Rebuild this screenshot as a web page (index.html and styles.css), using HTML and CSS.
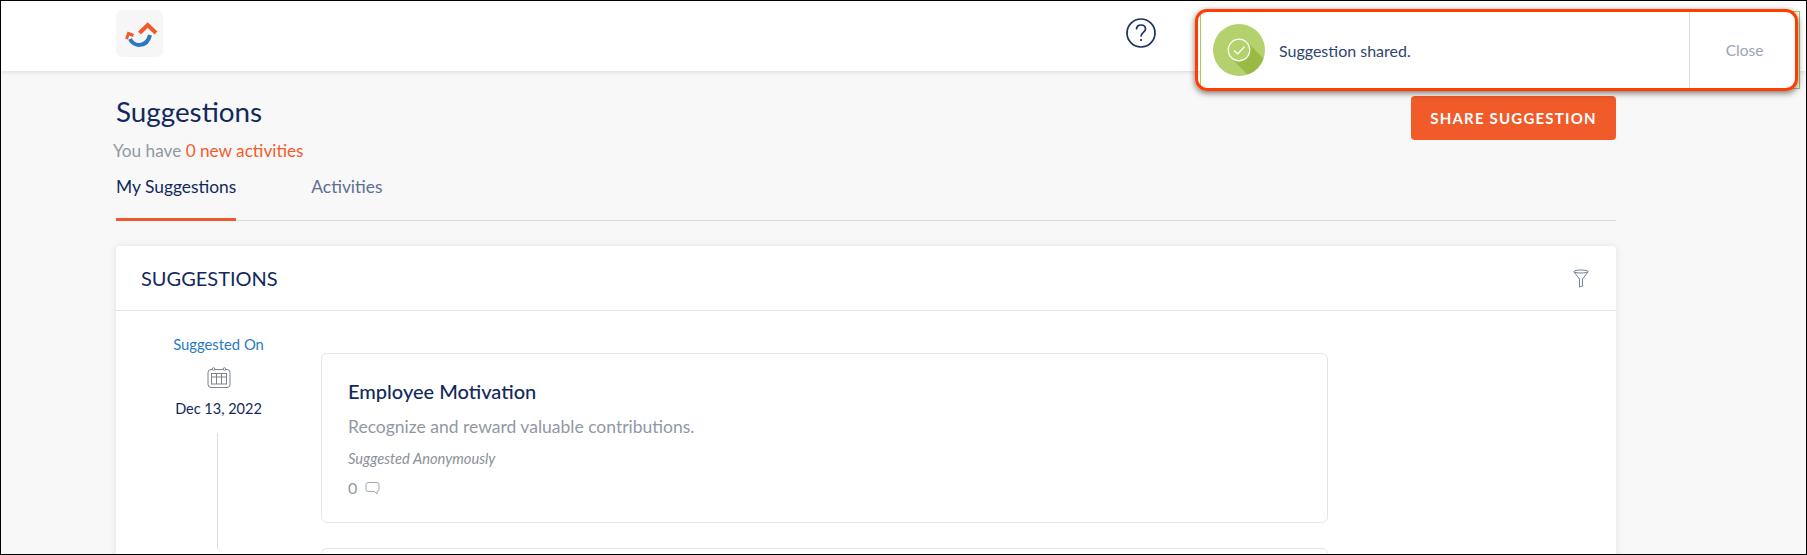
FILE: index.html
```html
<!DOCTYPE html>
<html lang="en">
<head>
<meta charset="utf-8">
<title>Suggestions</title>
<link rel="stylesheet" href="styles.css">
</head>
<body>
<div class="page">
  <header class="topbar">
    <div class="logo">
      <svg width="47" height="47" viewBox="0 0 47 47" fill="none">
        <path d="M23.5 23 L31.7 15 L40 23" stroke="#f45a28" stroke-width="4"/>
        <path d="M14 29 C17.5 37 31 38 34 25" stroke="#2a78bd" stroke-width="4"/>
        <path d="M10.500 29 L12.500 23.500 L17.500 25.500" stroke="#f45a28" stroke-width="3"/>
      </svg>
    </div>
    <svg class="help" width="30" height="30" viewBox="0 0 30 30" fill="none" stroke="#1b3263" stroke-width="1.700">
      <ellipse cx="15" cy="15" rx="14" ry="14"/>
      <path d="M10.500 11.500 C10.500 8.500 12.500 7 15 7 C17.800 7 19.500 8.800 19.500 11 C19.500 14.500 15 14.500 15 18.500"/>
      <path d="M15 21 V23"/>
    </svg>
  </header>

  <main class="content">
    <div class="title-row">
      <div>
        <h1 class="title">Suggestions</h1>
        <p class="subtitle">You have <span class="accent">0 new activities</span></p>
      </div>
      <button class="share">SHARE SUGGESTION</button>
    </div>

    <nav class="tabs">
      <a class="tab active">My Suggestions</a>
      <a class="tab">Activities</a>
    </nav>

    <section class="panel">
      <div class="panel-head">
        <h2 class="panel-title">SUGGESTIONS</h2>
        <svg width="16" height="19" viewBox="0 0 16 19" fill="none" stroke="#6f7f98" stroke-width="1">
          <ellipse cx="8" cy="2.500" rx="7" ry="1.500"/>
          <path d="M1 3 L6.500 10 V18 L9.500 17 V10 L15 3"/>
        </svg>
      </div>
      <div class="timeline">
        <div class="when">
          <div class="when-label">Suggested On</div>
          <svg class="cal" width="24" height="21" viewBox="0 0 24 21" fill="none" stroke="#7c8290" stroke-width="1">
            <rect x="1" y="2.500" width="22" height="18" rx="3"/>
            <rect x="4.500" y="6.500" width="15" height="10.500"/>
            <path d="M4.500 10 H19.500 M9.500 6.500 V17 M14.500 6.500 V17"/>
            <circle cx="6.500" cy="2" r="1.300" fill="#fff"/>
            <circle cx="17.500" cy="2" r="1.300" fill="#fff"/>
          </svg>
          <div class="when-date">Dec 13, 2022</div>
          <div class="when-line"></div>
        </div>
        <div class="cards">
          <article class="card">
            <h3 class="card-title">Employee Motivation</h3>
            <p class="card-desc">Recognize and reward valuable contributions.</p>
            <p class="card-anon">Suggested Anonymously</p>
            <div class="card-count">0
              <svg width="15" height="13" viewBox="0 0 15 13" fill="none" stroke="#a4a9b2" stroke-width="1">
                <path d="M3 .500 H12 Q14 .500 14 2.500 V7.500 Q14 9.500 12 9.500 V12 L9.500 9.500 H3 Q1 9.500 1 7.500 V2.500 Q1 .500 3 .500 Z"/>
              </svg>
            </div>
          </article>
          <article class="card"></article>
        </div>
      </div>
    </section>
  </main>

  <aside class="toast">
    <div class="toast-main">
      <svg class="toast-icon" width="52" height="52" viewBox="0 0 52 52">
        <defs><clipPath id="disc"><circle cx="26" cy="26" r="26"/></clipPath></defs>
        <circle cx="26" cy="26" r="26" fill="#b5d16e"/>
        <path d="M18 34 L34 18 L60 44 L44 60 Z" fill="#9ab945" clip-path="url(#disc)"/>
        <circle cx="26" cy="26" r="10.800" fill="#b5d16e" stroke="#fff" stroke-width="1.200"/>
        <path d="M21 26.500 L24.800 30 L31.500 22.500" fill="none" stroke="#fff" stroke-width="1.200"/>
      </svg>
      <span class="toast-text">Suggestion shared.</span>
    </div>
    <span class="toast-close">Close</span>
    <div class="callout"></div>
  </aside>
</div>
</body>
</html>
```
FILE: styles.css
```css
* { box-sizing: border-box; }
html, body { margin: 0; padding: 0; }
body { font-family: Lato, "Open Sans", sans-serif; color: #12295d; }
h1, h2, h3, p { margin: 0; font-weight: 400; }

.page {
  position: relative;
  height: 555px;
  overflow: hidden;
  background: #f8f8f8;
  border: 1px solid #000;
}

.topbar {
  display: flex;
  align-items: flex-start;
  height: 70px;
  padding: 9px 0 0 115px;
  background: #fff;
  box-shadow: 0 1px 5px rgba(0, 0, 0, .12);
}
.logo { width: 47px; height: 47px; background: #f6f6f6; border-radius: 7px; }
.help { margin: 8px 0 0 963px; }

.content { width: 1500px; margin-left: 115px; }
.title-row {
  display: flex;
  justify-content: space-between;
  align-items: flex-start;
  padding-top: 24px;
}
.title { font-size: 27.800px; line-height: 34px; }
.subtitle { margin: 11px 0 0 -3px; font-size: 17.200px; line-height: 22px; color: #9198a4; }
.accent { color: #f35b2a; }
.share {
  width: 205px;
  height: 44px;
  margin-top: 1px;
  border: 0;
  border-radius: 4px;
  background: #f15a29;
  color: #fff;
  font: 700 15px Lato, sans-serif;
  letter-spacing: 1.200px;
}

.tabs {
  display: flex;
  gap: 75px;
  height: 50px;
  margin-top: 9px;
  border-bottom: 1px solid #d9d9d9;
}
.tab { height: 50px; padding-top: 5px; font-size: 17.400px; line-height: 22px; color: #5d6f92; }
.tab.active { color: #12295d; border-bottom: 3px solid #f05a2a; }

.panel {
  height: 400px;
  margin-top: 25px;
  background: #fff;
  border-radius: 4px;
  box-shadow: 0 0 8px rgba(0, 0, 0, .09);
}
.panel-head {
  display: flex;
  justify-content: space-between;
  align-items: center;
  height: 65px;
  padding: 0 27px 0 25px;
  border-bottom: 1px solid #e4e4e4;
}
.panel-title { font-size: 20px; }

.timeline { display: flex; padding-top: 22px; }
.when {
  display: flex;
  flex-direction: column;
  align-items: center;
  width: 205px;
  flex: none;
}
.when-label { font-size: 14.800px; line-height: 22px; color: #2a7ac0; }
.cal { margin-top: 12px; }
.when-date { margin-top: 10px; font-size: 14.500px; line-height: 22px; }
.when-line { width: 1px; height: 116px; margin: 13px 3px 0 0; background: #dedede; }

.cards { width: 1007px; padding-top: 20px; }
.card {
  height: 170px;
  margin-bottom: 25px;
  padding: 22px 26px;
  background: #fff;
  border: 1.500px solid #e6e6e6;
  border-radius: 6px;
}
.card-title { font-size: 20px; line-height: 30px; font-weight: 500; }
.card-desc { margin-top: 7px; font-size: 17.500px; line-height: 28px; color: #9198a4; }
.card-anon { margin-top: 7px; font-size: 14.700px; line-height: 20px; font-style: italic; color: #8b909b; }
.card-count {
  display: flex;
  align-items: center;
  gap: 8px;
  margin-top: 9px;
  font-size: 16px;
  line-height: 22px;
  color: #9198a4;
}

.toast {
  position: absolute;
  left: 1199px;
  top: 10px;
  width: 600px;
  height: 78px;
  display: flex;
  background: #fff;
  border: 1px solid #a9c860;
}
.toast-main { display: flex; align-items: center; gap: 14px; flex: 1; padding-left: 12px; }
.toast-icon { flex: none; }
.toast-text { font-size: 16px; color: #2f446f; }
.toast-close {
  display: flex;
  align-items: center;
  justify-content: center;
  width: 110px;
  flex: none;
  font-size: 15.500px;
  color: #9aa3b4;
  border-left: 1px solid #dcdcdc;
}
.callout {
  position: absolute;
  left: -6px;
  top: -3px;
  width: 603px;
  height: 82px;
  border: 3px solid #ff3d00;
  border-radius: 12px;
  box-shadow: 0 2px 6px rgba(0, 0, 0, .55);
}
```
